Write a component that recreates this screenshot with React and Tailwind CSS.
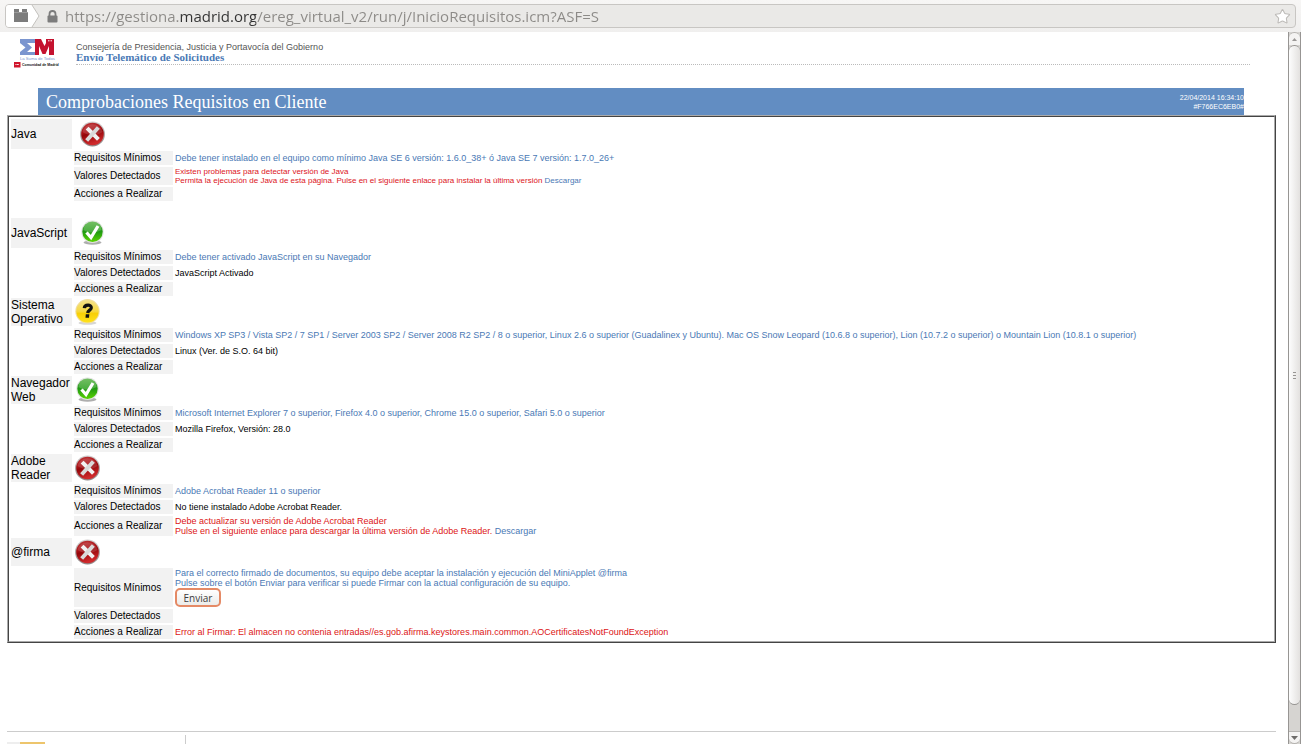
import { Star } from 'lucide-react';

const ErrorIcon = () => (
    <svg className="block w-[26px] h-[26px]" viewBox="0 0 26 26" role="img" aria-label="Error">
        <defs>
            <linearGradient id="err-ring" x1="0" y1="0" x2="0" y2="1">
                <stop offset="0" stopColor="#d2cfcf" />
                <stop offset="1" stopColor="#8e8585" />
            </linearGradient>
            <linearGradient id="err-fill" x1="0" y1="0" x2="0.3" y2="1">
                <stop offset="0" stopColor="#c03a3c" />
                <stop offset="0.45" stopColor="#a80f14" />
                <stop offset="0.55" stopColor="#930509" />
                <stop offset="1" stopColor="#cf2a2c" />
            </linearGradient>
        </defs>
        <circle cx="12.500" cy="13" r="12.500" fill="url(#err-ring)" />
        <circle cx="12.500" cy="13" r="11.300" fill="url(#err-fill)" />
        <path d="M2.500 11a10.300 10.300 0 0 1 20 0q-4 3-10 3T2.500 11z" fill="#fff" opacity="0.14" />
        <path d="M8.500 8.500l8.500 8.500" stroke="#f2f2f2" strokeWidth="4" strokeLinecap="square" />
        <path d="M17 8L8 18" stroke="#dadada" strokeWidth="4" strokeLinecap="square" />
    </svg>
);

const OkIcon = () => (
    <svg className="block w-[24px] h-[26px]" viewBox="0 0 24 26" role="img" aria-label="Correcto">
        <defs>
            <linearGradient id="ok-fill" x1="0" y1="0" x2="0" y2="1">
                <stop offset="0" stopColor="#4fae3c" />
                <stop offset="0.5" stopColor="#1f9a12" />
                <stop offset="1" stopColor="#5ad400" />
            </linearGradient>
        </defs>
        <ellipse cx="12.500" cy="22.500" rx="9" ry="2.200" fill="#8b8b8b" opacity="0.7" />
        <circle cx="12.500" cy="11.800" r="11.200" fill="#dfe3de" />
        <circle cx="12.500" cy="11.800" r="10.200" fill="url(#ok-fill)" />
        <path d="M3.500 10a9 9 0 0 1 18 0q-4 2-9 2.500T3.500 10z" fill="#fff" opacity="0.2" />
        <path d="M6.500 12.500l4.500 5L18 6" fill="none" stroke="#fff" strokeWidth="3.200" />
    </svg>
);

const UnknownIcon = () => (
    <svg className="block w-[26px] h-[26px]" viewBox="0 0 26 26" role="img" aria-label="Desconocido">
        <defs>
            <linearGradient id="unk-fill" x1="0" y1="0" x2="0" y2="1">
                <stop offset="0" stopColor="#f3e08c" />
                <stop offset="0.5" stopColor="#f6d840" />
                <stop offset="0.6" stopColor="#f8cf05" />
                <stop offset="1" stopColor="#ffe21c" />
            </linearGradient>
        </defs>
        <ellipse cx="12.500" cy="24" rx="9" ry="1.800" fill="#bbb" opacity="0.6" />
        <circle cx="12.500" cy="12.300" r="12.200" fill="#f1dfa0" />
        <circle cx="12.500" cy="12.300" r="11.200" fill="url(#unk-fill)" />
        <path d="M9.300 9.200c.3-4 7.200-4 7-.4-.2 2.400-3.400 2.200-3.700 5.200" fill="none" stroke="#111" strokeWidth="3.200" />
        <path d="M10.800 15.300h3.500l-.3 3.500h-3.500z" fill="#111" />
    </svg>
);

const Logo = () => (
    <svg className="block w-[46px] h-[31px]" viewBox="0 0 46 31" role="img" aria-label="Comunidad de Madrid">
        <path d="M6 1h15v4h-8l5 4.500-5 4.500h8v3H6v-3l5.500-4.500L6 5z" fill="#7b95cf" />
        <path d="M21 1h6l3.500 7L34 1h6v16h-5V8l-3.500 8h-3L25 8v9h-4z" fill="#c4122f" />
        <path d="M32 1h8v4h-8z" fill="#c4122f" />
        <path d="M34 2.800h4.500" stroke="#fff" strokeWidth="1" strokeDasharray="1 .5" />
        <text x="6" y="21.500" fontSize="4.200" fontFamily="Liberation Sans, sans-serif" fill="#7b95cf">La Suma de Todos</text>
        <rect x="0" y="24" width="6.500" height="5.500" fill="#d0142c" />
        <path d="M1.500 26.500h3.500" stroke="#fff" strokeWidth="1" strokeDasharray="1 .4" />
        <text x="8" y="28" fontSize="3.500" fontWeight="bold" fontFamily="Liberation Sans, sans-serif" fill="#111">Comunidad de Madrid</text>
    </svg>
);

const icons = { error: ErrorIcon, ok: OkIcon, unknown: UnknownIcon };

const Download = () => (
    <a href="#descargar" className="text-[#4a79b5]">Descargar</a>
);

const checks = [
    {
        name: 'Java',
        icon: 'error',
        tall: true,
        required: 'Debe tener instalado en el equipo como mínimo Java SE 6 versión: 1.6.0_38+ ó Java SE 7 versión: 1.7.0_26+',
        detected: (
            <p className="text-[8px] leading-[9px] text-[#dc1423]">
                Existen problemas para detectar versión de Java<br />
                Permita la ejecución de Java de esta página. Pulse en el siguiente enlace para instalar la última versión <Download />
            </p>
        ),
        spaceAfter: true,
    },
    {
        name: 'JavaScript',
        icon: 'ok',
        tall: true,
        required: 'Debe tener activado JavaScript en su Navegador',
        detected: 'JavaScript Activado',
    },
    {
        name: 'Sistema Operativo',
        icon: 'unknown',
        required: 'Windows XP SP3 / Vista SP2 / 7 SP1 / Server 2003 SP2 / Server 2008 R2 SP2 / 8 o superior, Linux 2.6 o superior (Guadalinex y Ubuntu). Mac OS Snow Leopard (10.6.8 o superior), Lion (10.7.2 o superior) o Mountain Lion (10.8.1 o superior)',
        detected: 'Linux (Ver. de S.O. 64 bit)',
    },
    {
        name: 'Navegador Web',
        icon: 'ok',
        required: 'Microsoft Internet Explorer 7 o superior, Firefox 4.0 o superior, Chrome 15.0 o superior, Safari 5.0 o superior',
        detected: 'Mozilla Firefox, Versión: 28.0',
    },
    {
        name: 'Adobe Reader',
        icon: 'error',
        required: 'Adobe Acrobat Reader 11 o superior',
        detected: 'No tiene instalado Adobe Acrobat Reader.',
        actions: (
            <>
                Debe actualizar su versión de Adobe Acrobat Reader<br />
                Pulse en el siguiente enlace para descargar la última versión de Adobe Reader. <Download />
            </>
        ),
    },
    {
        name: '@firma',
        icon: 'error',
        required: (
            <>
                Para el correcto firmado de documentos, su equipo debe aceptar la instalación y ejecución del MiniApplet @firma<br />
                Pulse sobre el botón Enviar para verificar si puede Firmar con la actual configuración de su equipo.<br />
                <button
                    type="button"
                    className="block w-[46px] h-[19px] rounded-[5px] border-2 border-[#e58a66] bg-linear-to-b from-white to-[#ececea] font-['Open_Sans',sans-serif] text-[10px] leading-[14px] text-[#3c3c3c]"
                >
                    Enviar
                </button>
            </>
        ),
        actions: 'Error al Firmar: El almacen no contenia entradas//es.gob.afirma.keystores.main.common.AOCertificatesNotFoundException',
    },
];

const DetailRow = ({ label, className, children }) => (
    <tr>
        <td></td>
        <th scope="row" className="h-[14px] bg-[#f2f2f2] text-left font-normal text-[10px] leading-[14px] whitespace-nowrap">
            {label}
        </th>
        <td className={`text-[9px] leading-[10px] ${className}`}>{children}</td>
    </tr>
);

const CheckRows = ({ check }) => {
    const Icon = icons[check.icon];
    return (
        <tbody>
            <tr>
                <th
                    scope="rowgroup"
                    className={`bg-[#f2f2f2] text-left font-normal text-[12px] leading-[14px] ${check.tall ? 'h-[30px]' : 'h-[28px]'}`}
                >
                    {check.name}
                </th>
                <td colSpan="2" className={check.tall ? 'pl-1.5' : 'pl-px'}>
                    <Icon />
                </td>
            </tr>
            <DetailRow label="Requisitos Mínimos" className="text-[#4a79b5]">{check.required}</DetailRow>
            <DetailRow label="Valores Detectados" className="text-black">{check.detected}</DetailRow>
            <DetailRow label="Acciones a Realizar" className="text-[#dc1414]">{check.actions}</DetailRow>
            {check.spaceAfter && (
                <tr>
                    <td colSpan="3" className="h-[13px]"></td>
                </tr>
            )}
        </tbody>
    );
};

const AddressBar = () => (
    <div className="h-8 shrink-0 px-[5px] pt-1 bg-linear-to-b from-[#f7f6f5] to-[#f0efee]">
        <div className="flex items-center h-6 pr-1 rounded-[4px] border border-[#c8c6c3] bg-[#eae9e7] overflow-hidden">
            <svg className="shrink-0 w-[34px] h-[22px]" viewBox="0 0 34 22" aria-hidden="true">
                <path d="M0 0h26l7 11-7 11H0z" fill="#fff" />
                <path d="M26 0l7 11-7 11" fill="none" stroke="#c3c1be" />
                <path d="M8 7V4h5v3h3V4h5v3h1v10H8z" fill="#7c7c7c" />
                <path d="M8 7.500h14" stroke="#9a9a9a" />
            </svg>
            <svg className="shrink-0 w-[13px] h-[13px] ml-1.5" viewBox="0 0 13 13" aria-hidden="true">
                <path d="M3.500 6V4a3 3 0 0 1 6 0v2" fill="none" stroke="#7c7c7c" strokeWidth="1.800" />
                <rect x="1.500" y="5.500" width="10" height="7" rx="1" fill="#7c7c7c" />
            </svg>
            <input
                type="text"
                aria-label="Dirección"
                defaultValue="https://gestiona.madrid.org/ereg_virtual_v2/run/j/InicioRequisitos.icm?ASF=S"
                className="grow min-w-0 ml-1.5 outline-none font-['Open_Sans',sans-serif] text-[15px] leading-5 text-transparent bg-clip-text bg-[linear-gradient(90deg,#8c8a87_114px,#333_114px,#333_191px,#8c8a87_191px)]"
            />
            <button type="button" aria-label="Añadir a marcadores">
                <Star className="block w-[17px] h-[17px] text-[#bdbbb8] fill-white" strokeWidth={1.5} />
            </button>
        </div>
    </div>
);

const ScrollBar = () => (
    <div className="flex flex-col shrink-0 w-[13px] border-x border-[#979593] bg-[#d6d4d1]" aria-hidden="true">
        <div className="flex items-center justify-center h-[13px] rounded-t-full border-t border-[#b5b3b0] bg-[#f4f3f2]">
            <svg className="w-[5px] h-[3px]" viewBox="0 0 5 3"><path d="M0 3L2.500 0 5 3z" fill="#9a9896" /></svg>
        </div>
        <div className="flex flex-col items-center justify-center gap-0.5 grow rounded-full border-y border-[#979593] bg-linear-to-r from-[#fdfdfd] to-[#e3e1df]">
            <span className="w-[3px] h-px bg-[#979593]" />
            <span className="w-[3px] h-px bg-[#979593]" />
            <span className="w-[3px] h-px bg-[#979593]" />
        </div>
        <div className="h-[26px]" />
        <div className="flex items-center justify-center h-[13px] rounded-b-full border-y border-[#b5b3b0] bg-[#f4f3f2]">
            <svg className="w-[7px] h-1" viewBox="0 0 7 4"><path d="M0 0h7L3.500 4z" fill="#6e6c6a" /></svg>
        </div>
    </div>
);

export default function App() {
    return (
        <div className="flex flex-col h-screen overflow-hidden bg-white font-['Liberation_Sans',Arial,sans-serif] text-black">
            <AddressBar />
            <div className="flex grow min-h-0">
                <main className="flex flex-col grow min-w-0 overflow-hidden">
                    <header className="flex items-start shrink-0 h-14 pt-1.5 pl-3.5 pr-[38px]">
                        <Logo />
                        <div className="grow ml-4 pt-1 pb-0.5 border-b border-dotted border-[#bbb]">
                            <p className="text-[9px] leading-[10px] text-[#555]">Consejería de Presidencia, Justicia y Portavocía del Gobierno</p>
                            <p className="font-['Liberation_Serif',serif] font-bold text-[11px] leading-[10px] text-[#4a79b5]">Envío Telemático de Solicitudes</p>
                        </div>
                    </header>
                    <div className="flex items-center justify-between shrink-0 h-[27px] ml-[38px] mr-11 pl-2 bg-[#628dc2] text-white">
                        <h1 className="font-['Liberation_Serif',serif] text-[18px] leading-5">Comprobaciones Requisitos en Cliente</h1>
                        <p className="text-right text-[7px] leading-[9px]">22/04/2014 16:34:10<br />#F766EC6EB0#</p>
                    </div>
                    <div className="shrink-0 ml-[7px] mr-3 border border-t-[#aaa] border-l-[#aaa] border-b-[#444] border-r-[#444]">
                        <div className="border border-t-[#444] border-l-[#444] border-b-[#aaa] border-r-[#aaa]">
                            <table className="table-fixed w-full border-separate border-spacing-[2px]">
                                <colgroup>
                                    <col className="w-[61px]" />
                                    <col className="w-[99px]" />
                                    <col />
                                </colgroup>
                                {checks.map((check) => (
                                    <CheckRows key={check.name} check={check} />
                                ))}
                            </table>
                        </div>
                    </div>
                    <footer className="flex items-end shrink-0 h-[13px] mt-auto ml-[7px] mr-3 border-t border-[#ccc]">
                        <div className="w-[13px] h-0.5 bg-[#eee]" />
                        <div className="w-[25px] h-0.5 bg-[#edc56c]" />
                        <div className="w-px h-[9px] ml-[140px] bg-[#ccc]" />
                    </footer>
                </main>
                <ScrollBar />
            </div>
        </div>
    );
}
